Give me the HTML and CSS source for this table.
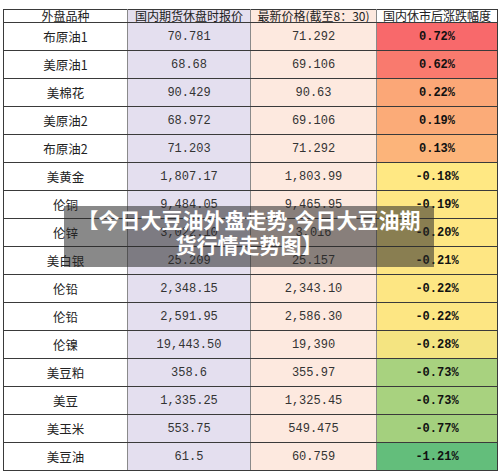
FILE: index.html
```html
<!DOCTYPE html>
<html lang="zh">
<head>
    <meta charset="UTF-8">
    <title>今日大豆油外盘走势</title>
    <link rel="stylesheet" href="styles.css">
</head>
<body>
    <div class="sheet">
        <table class="quotes">
            <thead>
                <tr>
                    <th class="name">外盘品种</th>
                    <th class="home">国内期货休盘时报价</th>
                    <th class="last">最新价格(截至8：30)</th>
                    <th class="pct">国内休市后涨跌幅度</th>
                </tr>
            </thead>
            <tbody>
                <tr><td class="name">布原油1</td><td class="home">70.781</td><td class="last">71.292</td><td class="pct" style="background:#f8696b">0.72%</td></tr>
                <tr><td class="name">美原油1</td><td class="home">68.68</td><td class="last">69.106</td><td class="pct" style="background:#f97a6e">0.62%</td></tr>
                <tr><td class="name">美棉花</td><td class="home">90.429</td><td class="last">90.63</td><td class="pct" style="background:#fba777">0.22%</td></tr>
                <tr><td class="name">美原油2</td><td class="home">68.972</td><td class="last">69.106</td><td class="pct" style="background:#fbab78">0.19%</td></tr>
                <tr><td class="name">布原油2</td><td class="home">71.203</td><td class="last">71.292</td><td class="pct" style="background:#fcb47a">0.13%</td></tr>
                <tr><td class="name">美黄金</td><td class="home">1,807.17</td><td class="last">1,803.99</td><td class="pct" style="background:#ffe883">-0.18%</td></tr>
                <tr><td class="name">伦铜</td><td class="home">9,484.05</td><td class="last">9,465.95</td><td class="pct" style="background:#fee783">-0.19%</td></tr>
                <tr><td class="name">伦锌</td><td class="home">3,022.10</td><td class="last">3,016</td><td class="pct" style="background:#fee783">-0.20%</td></tr>
                <tr><td class="name">美白银</td><td class="home">25.209</td><td class="last">25.157</td><td class="pct" style="background:#fee683">-0.21%</td></tr>
                <tr><td class="name">伦铅</td><td class="home">2,348.15</td><td class="last">2,343.10</td><td class="pct" style="background:#fde683">-0.22%</td></tr>
                <tr><td class="name">伦铅</td><td class="home">2,591.95</td><td class="last">2,586.30</td><td class="pct" style="background:#fde683">-0.22%</td></tr>
                <tr><td class="name">伦镍</td><td class="home">19,443.50</td><td class="last">19,390</td><td class="pct" style="background:#f4e481">-0.28%</td></tr>
                <tr><td class="name">美豆粕</td><td class="home">358.6</td><td class="last">355.97</td><td class="pct" style="background:#a8d27f">-0.73%</td></tr>
                <tr><td class="name">美豆</td><td class="home">1,335.25</td><td class="last">1,325.45</td><td class="pct" style="background:#a8d27f">-0.73%</td></tr>
                <tr><td class="name">美玉米</td><td class="home">553.75</td><td class="last">549.475</td><td class="pct" style="background:#a4d07e">-0.77%</td></tr>
                <tr><td class="name">美豆油</td><td class="home">61.5</td><td class="last">60.759</td><td class="pct" style="background:#63be7b">-1.21%</td></tr>
            </tbody>
        </table>
        <div class="banner">【今日大豆油外盘走势,今日大豆油期<br>货行情走势图】</div>
    </div>
</body>
</html>
```

FILE: styles.css
```css
* {
    box-sizing: border-box;
    margin: 0;
    padding: 0;
}
body {
    background-color: #fff;
    width: 500px;
    height: 475px;
    overflow: hidden;
    font-family: "Noto Sans CJK SC", sans-serif;
    color: #222;
}
.sheet {
    position: relative;
    padding: 9px 3px 0 3px;
}
.quotes {
    border-collapse: collapse;
    width: 494px;
    table-layout: fixed;
}
.quotes th,
.quotes td {
    border-top: 1px solid #3a3a3a;
    border-bottom: 1px solid #3a3a3a;
    border-left: 1px solid #8a8a8a;
    border-right: 1px solid #8a8a8a;
    text-align: center;
    white-space: nowrap;
    overflow: hidden;
}
.quotes th {
    height: 13px;
    line-height: 12px;
    font-size: 12px;
    font-weight: normal;
    color: #222;
}
.quotes td {
    height: 28px;
    font-size: 12px;
}
.quotes .name {
    width: 124px;
    background-color: #fff;
    border-left-color: #3a3a3a;
}
.quotes .home {
    width: 123px;
    background-color: #e4dfef;
}
.quotes .last {
    width: 126px;
    background-color: #fde9df;
}
.quotes .pct {
    width: 121px;
    border-right-color: #3a3a3a;
}
.quotes th.pct {
    background-color: #fff;
}
.quotes td.name {
    font-size: 12.5px;
}
.quotes td.home,
.quotes td.last {
    font-family: "Liberation Mono", "Noto Sans CJK SC", monospace;
    font-size: 12px;
    color: #333;
}
.quotes td.pct {
    font-family: "Liberation Mono", monospace;
    font-weight: bold;
    font-size: 12px;
    color: #111;
}
/* caption laid over the sheet */
.banner {
    position: absolute;
    left: 64px;
    top: 206px;
    width: 370px;
    height: 61px;
    padding-top: 1px;
    background-color: rgba(40, 40, 40, 0.55);
    color: #fff;
    font-weight: bold;
    font-size: 21px;
    line-height: 25px;
    text-align: center;
    white-space: nowrap;
}
```
